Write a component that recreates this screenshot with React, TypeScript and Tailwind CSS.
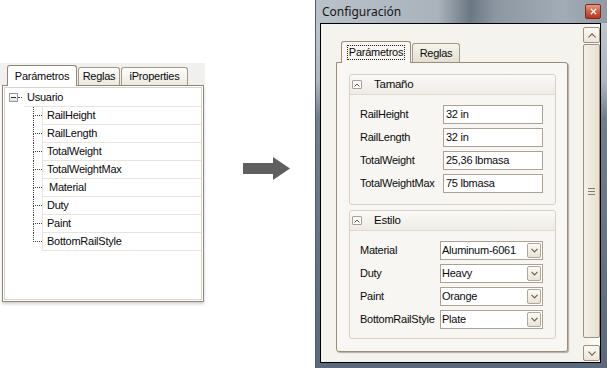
import { X } from 'lucide-react';

const treeItems = ['RailHeight', 'RailLength', 'TotalWeight', 'TotalWeightMax', 'Material', 'Duty', 'Paint', 'BottomRailStyle'];

const sizeFields = [
  { label: 'RailHeight', value: '32 in' },
  { label: 'RailLength', value: '32 in' },
  { label: 'TotalWeight', value: '25,36 lbmasa' },
  { label: 'TotalWeightMax', value: '75 lbmasa' },
];

const styleFields = [
  { label: 'Material', value: 'Aluminum-6061' },
  { label: 'Duty', value: 'Heavy' },
  { label: 'Paint', value: 'Orange' },
  { label: 'BottomRailStyle', value: 'Plate' },
];

function LeftTab({ label, width, active }: { label: string; width: string; active?: boolean }) {
  if (active) {
    return (
      <div className={`${width} h-[21px] -mb-px relative z-10 flex items-center justify-center rounded-t-[3px] border border-b-0 border-[#918575] bg-white`}>
        {label}
      </div>
    );
  }
  return (
    <div className={`${width} h-[18px] flex items-center justify-center rounded-t-[3px] border border-b-0 border-[#a39887] bg-gradient-to-b from-[#fdfdfb] to-[#ece9e0]`}>
      {label}
    </div>
  );
}

function LeftPanel() {
  return (
    <div className="w-[205px] pt-[63px] shrink-0">
      <div className="h-[22px] bg-[#f0f0ee] flex items-end pl-[7px] gap-[1px]">
        <LeftTab label="Parámetros" width="w-[70px]" active />
        <LeftTab label="Reglas" width="w-[42px]" />
        <LeftTab label="iProperties" width="w-[67px]" />
      </div>
      <div className="ml-[2px] w-[202px] h-[217px] border border-[#918575] bg-white p-px shadow-[0_2px_3px_rgba(0,0,0,0.18)]">
        <div className="h-full border border-[#d9d4ca]">
          {/* root node */}
          <div className="flex h-[19px] items-center">
            <div className="ml-[4px] w-[9px] h-[9px] border border-[#8e9aa6] bg-gradient-to-b from-white to-[#e3e3dc] flex items-center justify-center">
              <div className="w-[5px] h-px bg-[#2b2b2b]" />
            </div>
            <div className="w-[4px] border-b border-dotted border-[#444]" />
            <div className="flex-1 h-full border-b border-[#e7e4dc] flex items-center pl-[3px] ml-[2px]">Usuario</div>
          </div>
          {treeItems.map((item, i) => {
            const last = i === treeItems.length - 1;
            return (
              <div key={item} className="flex h-[18px]">
                <div className="w-[28px] shrink-0" />
                <div className="w-[9px] shrink-0 flex flex-col">
                  <div className="h-[9px] border-l border-b border-dotted border-[#444]" />
                  {!last && <div className="flex-1 border-l border-dotted border-[#444]" />}
                </div>
                <div className={`flex-1 border-l border-b border-[#e7e4dc] flex items-center ${item === 'Material' ? 'pl-[6px]' : 'pl-[4px]'}`}>
                  {item}
                </div>
              </div>
            );
          })}
        </div>
      </div>
    </div>
  );
}

function Arrow() {
  return (
    <div className="ml-[38px] mt-[157px] shrink-0">
      <svg width="47" height="23" viewBox="0 0 47 23">
        <polygon points="0,6 30,6 30,0 47,11.5 30,23 30,17 0,17" fill="#5f5f5f" />
      </svg>
    </div>
  );
}

function CollapseButton() {
  return (
    <div className="w-[10px] h-[9px] border border-[#a9a196] bg-white rounded-[1px] flex items-center justify-center">
      <svg width="6" height="4" viewBox="0 0 6 4">
        <polyline points="0.5,3.5 3,1 5.5,3.5" fill="none" stroke="#555" strokeWidth="1" />
      </svg>
    </div>
  );
}

function Group({ title, children, pb }: { title: string; children: React.ReactNode; pb: string }) {
  return (
    <div className="border border-[#d6d0c5] rounded-[3px] bg-[#f7f6f2]">
      <div className="h-[20px] flex items-center pl-[2px] gap-[12px] border-b border-[#dfdacf] bg-gradient-to-b from-[#fbfaf8] to-[#eeebe3] rounded-t-[3px]">
        <CollapseButton />
        <span className="text-[11.5px]">{title}</span>
      </div>
      <div className={`pt-[10px] ${pb} pl-[10px] flex flex-col gap-[4px]`}>{children}</div>
    </div>
  );
}

function ComboButton() {
  return (
    <div className="w-[14px] h-[15px] my-auto mr-[1px] border border-[#b3a795] rounded-[2px] bg-gradient-to-b from-[#fbfaf7] to-[#e9e4d8] flex items-center justify-center">
      <svg width="7" height="5" viewBox="0 0 7 5">
        <polyline points="0.5,0.8 3.5,3.8 6.5,0.8" fill="none" stroke="#6d604f" strokeWidth="1.2" />
      </svg>
    </div>
  );
}

function Scrollbar() {
  return (
    <div className="w-[17px] shrink-0 bg-gradient-to-r from-[#f3f1ea] to-[#fdfdfb] flex flex-col pt-[3px] pb-px">
      <div className="h-[16px] border border-[#9f8f7c] rounded-[2px] bg-gradient-to-b from-[#fbfaf6] to-[#ebe6da] flex items-center justify-center">
        <svg width="8" height="5" viewBox="0 0 8 5">
          <polyline points="0.5,4.3 4,0.8 7.5,4.3" fill="none" stroke="#6f6252" strokeWidth="1.1" />
        </svg>
      </div>
      <div className="mt-px h-[294px] border border-[#9f8f7c] rounded-[2px] bg-gradient-to-r from-[#f4f1e8] to-[#e7e0d0] flex flex-col items-center justify-center gap-[2px]">
        <div className="w-[7px] h-px bg-[#8a7b6a]" />
        <div className="w-[7px] h-px bg-[#8a7b6a]" />
        <div className="w-[7px] h-px bg-[#8a7b6a]" />
      </div>
      <div className="flex-1" />
      <div className="h-[16px] border border-[#9f8f7c] rounded-[2px] bg-gradient-to-b from-[#fbfaf6] to-[#ebe6da] flex items-center justify-center">
        <svg width="8" height="5" viewBox="0 0 8 5">
          <polyline points="0.5,0.7 4,4.2 7.5,0.7" fill="none" stroke="#6f6252" strokeWidth="1.1" />
        </svg>
      </div>
    </div>
  );
}

function Window() {
  return (
    <div className="ml-auto w-[292px] h-[368px] shrink-0 flex flex-col border-l border-[#4f5b67] bg-[linear-gradient(to_bottom,#c3cad1_0%,#aeb7c0_22%,#6f7f90_32%,#5a6a7c_100%)]">
      {/* title bar */}
      <div className="h-[23px] flex items-center bg-[linear-gradient(to_right,#b9c1c9_0%,#aab3bc_42%,#6b7783_53%,#8c97a2_62%,#a2acb6_85%,#8f9aa6_100%)]">
        <span className="pl-[6px] text-[12px] tracking-normal text-[#161616] font-['Noto_Sans',sans-serif]">Configuración</span>
        <div className="ml-auto mr-[6px] w-[16px] h-[15px] rounded-[2px] border border-[#7b2b1c] bg-gradient-to-b from-[#e79a86] via-[#d15a40] to-[#b8361e] flex items-center justify-center">
          <X size={9} strokeWidth={3.5} color="#ffffff" />
        </div>
      </div>
      {/* client area */}
      <div className="ml-[4px] mr-[6px] h-[340px] border border-black bg-[#f5f3ee] flex">
        <div className="flex-1 pt-[17px] pl-[15px] pr-[15px] pb-[10px] flex flex-col">
          <div className="h-[21px] flex items-end pl-[5px] gap-[1px]">
            <div className="w-[70px] h-[22px] -mb-px relative z-10 rounded-t-[3px] border border-b-0 border-[#9c8d7b] bg-[#f8f7f3] flex items-center justify-center">
              <span className="outline outline-1 outline-dotted outline-[#222] px-[1px] leading-[13px]">Parámetros</span>
            </div>
            <div className="w-[48px] h-[19px] rounded-t-[3px] border border-b-0 border-[#a49887] bg-gradient-to-b from-[#f6f4ee] to-[#e4dfd2] flex items-center justify-center">
              Reglas
            </div>
          </div>
          <div className="flex-1 border border-[#9c8d7b] rounded-b-[3px] rounded-tr-[3px] bg-[#f8f7f3] shadow-[1px_1px_1px_rgba(60,40,20,0.35)] pt-[11px] pl-[12px] pr-[11px] flex flex-col gap-[5px]">
            <Group title="Tamaño" pb="pb-[11px]">
              {sizeFields.map((f) => (
                <div key={f.label} className="flex items-center h-[19px]">
                  <span className="w-[83px] shrink-0">{f.label}</span>
                  <div className="w-[100px] h-[19px] border border-[#aba293] bg-white flex items-center pl-[2px]">{f.value}</div>
                </div>
              ))}
            </Group>
            <Group title="Estilo" pb="pb-[9px]">
              {styleFields.map((f) => (
                <div key={f.label} className="flex items-center h-[19px]">
                  <span className="w-[80px] shrink-0 whitespace-nowrap">{f.label}</span>
                  <div className="w-[103px] h-[19px] border border-[#aba293] bg-white flex items-stretch">
                    <span className="flex-1 flex items-center pl-[1px]">{f.value}</span>
                    <ComboButton />
                  </div>
                </div>
              ))}
            </Group>
          </div>
        </div>
        <Scrollbar />
      </div>
    </div>
  );
}

export default function App() {
  return (
    <div className="w-[607px] h-[368px] bg-white flex items-start overflow-hidden font-['Liberation_Sans',Arial,sans-serif] text-[11px] tracking-[-0.25px] text-[#0a0a0a] leading-none">
      <LeftPanel />
      <Arrow />
      <Window />
    </div>
  );
}
